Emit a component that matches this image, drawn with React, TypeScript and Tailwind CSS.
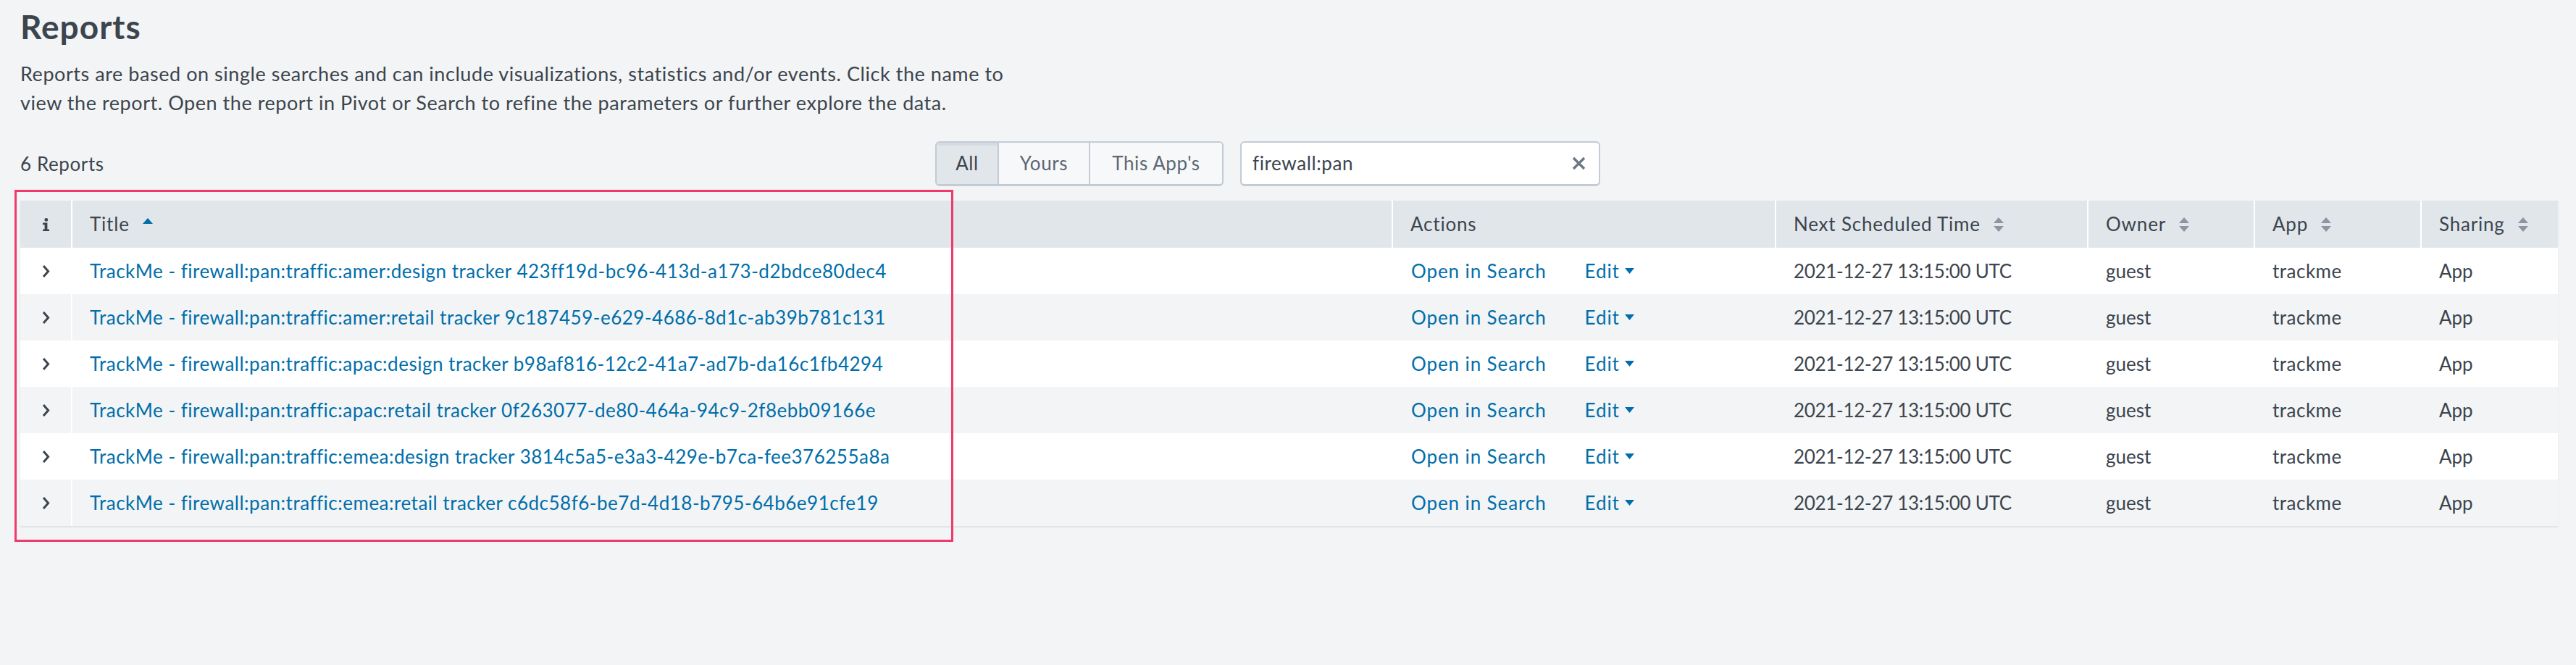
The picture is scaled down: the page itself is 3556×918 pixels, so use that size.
import React from "react";

const TITLES = [
  "TrackMe - firewall:pan:traffic:amer:design tracker 423ff19d-bc96-413d-a173-d2bdce80dec4",
  "TrackMe - firewall:pan:traffic:amer:retail tracker 9c187459-e629-4686-8d1c-ab39b781c131",
  "TrackMe - firewall:pan:traffic:apac:design tracker b98af816-12c2-41a7-ad7b-da16c1fb4294",
  "TrackMe - firewall:pan:traffic:apac:retail tracker 0f263077-de80-464a-94c9-2f8ebb09166e",
  "TrackMe - firewall:pan:traffic:emea:design tracker 3814c5a5-e3a3-429e-b7ca-fee376255a8a",
  "TrackMe - firewall:pan:traffic:emea:retail tracker c6dc58f6-be7d-4d18-b795-64b6e91cfe19",
];

const COLS = "grid grid-cols-[72px_1823px_529px_431px_230px_230px_188px]";

function SortBoth() {
  return (
    <svg width="14" height="20" viewBox="0 0 14 20" className="ml-[18px] shrink-0">
      <path d="M7 0 L14 8 H0 Z" fill="#8c96a1" />
      <path d="M0 12 H14 L7 20 Z" fill="#8c96a1" />
    </svg>
  );
}

function SortUp() {
  return (
    <svg width="14" height="8" viewBox="0 0 14 8" className="ml-[18px] mb-[10px] shrink-0">
      <path d="M7 0 L14 8 H0 Z" fill="#006eaa" />
    </svg>
  );
}

function InfoIcon() {
  return (
    <svg width="11" height="18" viewBox="0 0 11 18">
      <circle cx="5.8" cy="2.4" r="2.4" fill="#3c444d" />
      <path d="M1 6.6 H7.4 V15.4 H10 V18 H1 V15.4 H3.6 V9.2 H1 Z" fill="#3c444d" />
    </svg>
  );
}

function Chevron() {
  return (
    <svg width="11" height="19" viewBox="0 0 11 19">
      <path d="M2 2 L8.6 9.5 L2 17" fill="none" stroke="#3c444d" strokeWidth="3" />
    </svg>
  );
}

function Caret() {
  return (
    <svg width="13" height="8" viewBox="0 0 13 8" className="ml-[7px]">
      <path d="M0 0 H13 L6.5 8 Z" fill="#006eaa" />
    </svg>
  );
}

function HeaderCell({ label, sort, last }: { label: string; sort?: "up" | "both"; last?: boolean }) {
  return (
    <div
      className={`flex items-center pl-[24px] tracking-[0.8px] ${last ? "" : "border-r-2 border-white"}`}
    >
      <span>{label}</span>
      {sort === "up" && <SortUp />}
      {sort === "both" && <SortBoth />}
    </div>
  );
}

export default function App() {
  return (
    <div className="relative min-h-screen w-full bg-[#f2f4f5] pl-[28px] text-[#3c444d] font-['Lato',sans-serif]">
      <h1 className="pt-[9px] text-[46px] font-bold leading-[56px] tracking-[1px]">Reports</h1>
      <p className="mt-[17px] max-w-[1400px] text-[27px] leading-[40px] tracking-[0.55px]">
        Reports are based on single searches and can include visualizations, statistics and/or events. Click the name to view the report. Open the report in Pivot or Search to refine the parameters or further explore the data.
      </p>

      <div className="mt-[33px] flex h-[62px] items-center text-[26px] tracking-[0.6px]">
        <div className="w-[1263px]">6 Reports</div>
        <div className="flex h-[62px] overflow-hidden rounded-[6px] border-2 border-b-[3px] border-[#c3cbd4]">
          <div className="flex w-[84px] items-center justify-center bg-[#e1e6eb] text-[#3c444d] shadow-[inset_0_4px_0_#d5dbe2]">
            All
          </div>
          <div className="flex w-[126px] items-center justify-center border-l-2 border-[#c3cbd4] bg-[#f7f8fa] text-[#5c6773]">
            Yours
          </div>
          <div className="flex w-[184px] items-center justify-center border-l-2 border-[#c3cbd4] bg-[#f7f8fa] text-[#5c6773]">
            This App's
          </div>
        </div>
        <div className="ml-[23px] flex h-[62px] w-[497px] items-center justify-between rounded-[6px] border-2 border-b-[3px] border-[#c3cbd4] bg-white pl-[15px] pr-[18px]">
          <span className="text-[#3c444d]">firewall:pan</span>
          <svg width="19" height="19" viewBox="0 0 19 19">
            <path d="M2 2 L17 17 M17 2 L2 17" stroke="#6b7785" strokeWidth="3.4" />
          </svg>
        </div>
      </div>

      <div className="mt-[20px] w-[3503px] text-[26px] shadow-[0_2px_2px_rgba(0,0,0,0.08)]">
        <div className={`${COLS} h-[65px] bg-[#e1e6eb]`}>
          <div className="flex items-center justify-center border-r-2 border-white">
            <InfoIcon />
          </div>
          <HeaderCell label="Title" sort="up" />
          <HeaderCell label="Actions" />
          <HeaderCell label="Next Scheduled Time" sort="both" />
          <HeaderCell label="Owner" sort="both" />
          <HeaderCell label="App" sort="both" />
          <HeaderCell label="Sharing" sort="both" last />
        </div>
        {TITLES.map((t, i) => (
          <div
            key={t}
            className={`${COLS} h-[64px] ${i % 2 === 0 ? "bg-white" : "bg-[#f2f4f5]"}`}
          >
            <div className="flex items-center justify-center border-r-2 border-white">
              <Chevron />
            </div>
            <div className="flex items-center pl-[24px] tracking-[0.5px] text-[#006eaa]">{t}</div>
            <div className="flex items-center pl-[25px] tracking-[0.9px] text-[#006eaa]">
              <span>Open in Search</span>
              <span className="ml-[53px] flex items-center">
                Edit
                <Caret />
              </span>
            </div>
            <div className="flex items-center pl-[24px] tracking-[-0.3px]">2021-12-27 13:15:00 UTC</div>
            <div className="flex items-center pl-[24px]">guest</div>
            <div className="flex items-center pl-[24px] tracking-[0.5px]">trackme</div>
            <div className="flex items-center pl-[24px]">App</div>
          </div>
        ))}
      </div>

      <div className="pointer-events-none absolute left-[20px] top-[262px] h-[486px] w-[1296px] border-[3px] border-[#f0396b]" />
    </div>
  );
}
